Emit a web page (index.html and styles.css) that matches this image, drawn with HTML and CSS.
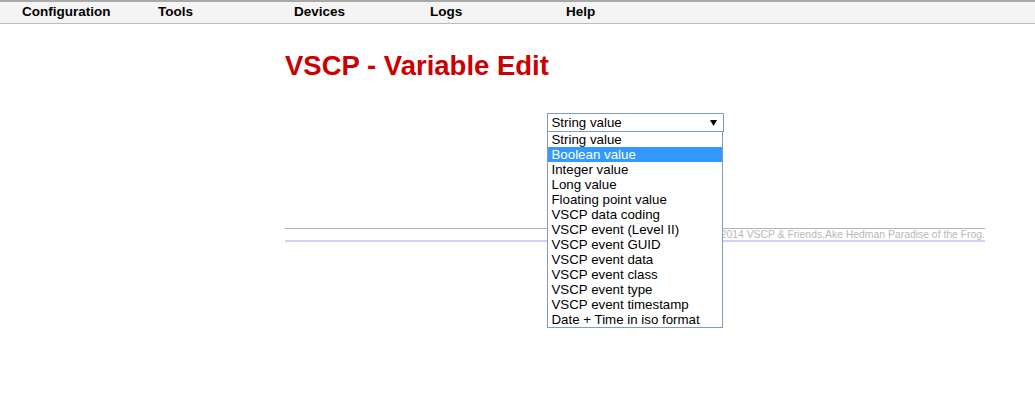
FILE: index.html
```html
<!DOCTYPE html>
<html>
<head>
<meta charset="utf-8">
<title>VSCP - Variable Edit</title>
<link rel="stylesheet" href="styles.css">
</head>
<body>
<nav class="menubar">
  <span class="menu-item">Configuration</span>
  <span class="menu-item">Tools</span>
  <span class="menu-item">Devices</span>
  <span class="menu-item">Logs</span>
  <span class="menu-item">Help</span>
</nav>
<main class="content">
  <h1 class="title">VSCP - Variable Edit</h1>
  <div class="form-row">
    <div class="select-wrap">
      <div class="select">
        <span class="select-text">String value</span>
        <svg class="select-arrow" width="7" height="6" viewBox="0 0 7 6"><polygon points="0,0 7,0 3.5,6" fill="#000"/></svg>
      </div>
      <ul class="listbox">
        <li class="option">String value</li>
        <li class="option selected">Boolean value</li>
        <li class="option">Integer value</li>
        <li class="option">Long value</li>
        <li class="option">Floating point value</li>
        <li class="option">VSCP data coding</li>
        <li class="option">VSCP event (Level II)</li>
        <li class="option">VSCP event GUID</li>
        <li class="option">VSCP event data</li>
        <li class="option">VSCP event class</li>
        <li class="option">VSCP event type</li>
        <li class="option">VSCP event timestamp</li>
        <li class="option">Date + Time in iso format</li>
      </ul>
    </div>
  </div>
  <footer class="footer">2014 VSCP &amp; Friends,Ake Hedman Paradise of the Frog.</footer>
</main>
</body>
</html>
```
FILE: styles.css
```css
html, body {
  margin: 0;
  padding: 0;
  background: #fff;
  font-family: "Liberation Sans", Arial, sans-serif;
}

body {
  min-height: 100vh;
}

.menubar {
  display: grid;
  grid-template-columns: repeat(5, 136px);
  padding-left: 22px;
  height: 21px;
  background: #f4f4f4;
  border-top: 2px solid #a9a9a9;
  border-bottom: 1px solid #bcbcbc;
}

.menu-item {
  font-size: 13.5px;
  font-weight: bold;
  color: #000;
  line-height: 19px;
}

.content {
  margin-left: 285px;
  width: 700px;
}

.title {
  margin: 26px 0 0 0;
  font-size: 27.5px;
  line-height: 31px;
  font-weight: bold;
  color: #cc0000;
}

.form-row {
  display: flex;
  justify-content: center;
  margin-top: 32px;
  height: 19px;
}

.select-wrap {
  position: relative;
  width: 177px;
}

.select {
  box-sizing: border-box;
  height: 19px;
  border: 1px solid #7f9db9;
  display: flex;
  align-items: center;
  justify-content: space-between;
  padding: 0 6px 0 4px;
  font-size: 13.3px;
  color: #000;
  background: #fff;
}

.select-text {
  line-height: 17px;
}

.select-arrow {
  display: block;
}

.listbox {
  position: absolute;
  left: 0;
  top: 18px;
  width: 176px;
  box-sizing: border-box;
  margin: 0;
  padding: 0;
  list-style: none;
  background: #fff;
  border: 1px solid #7f9db9;
  z-index: 10;
}

.option {
  height: 15px;
  line-height: 15px;
  padding-left: 4px;
  font-size: 13.3px;
  color: #000;
  white-space: nowrap;
}

.option.selected {
  background: #3399ff;
  color: #fff;
}

.footer {
  margin-top: 96px;
  border-top: 1px solid #b4b4b4;
  border-bottom: 2px solid #d0d0fc;
  height: 11px;
  line-height: 11px;
  font-size: 10.4px;
  color: #b8b8b8;
  text-align: right;
  white-space: nowrap;
}
```
